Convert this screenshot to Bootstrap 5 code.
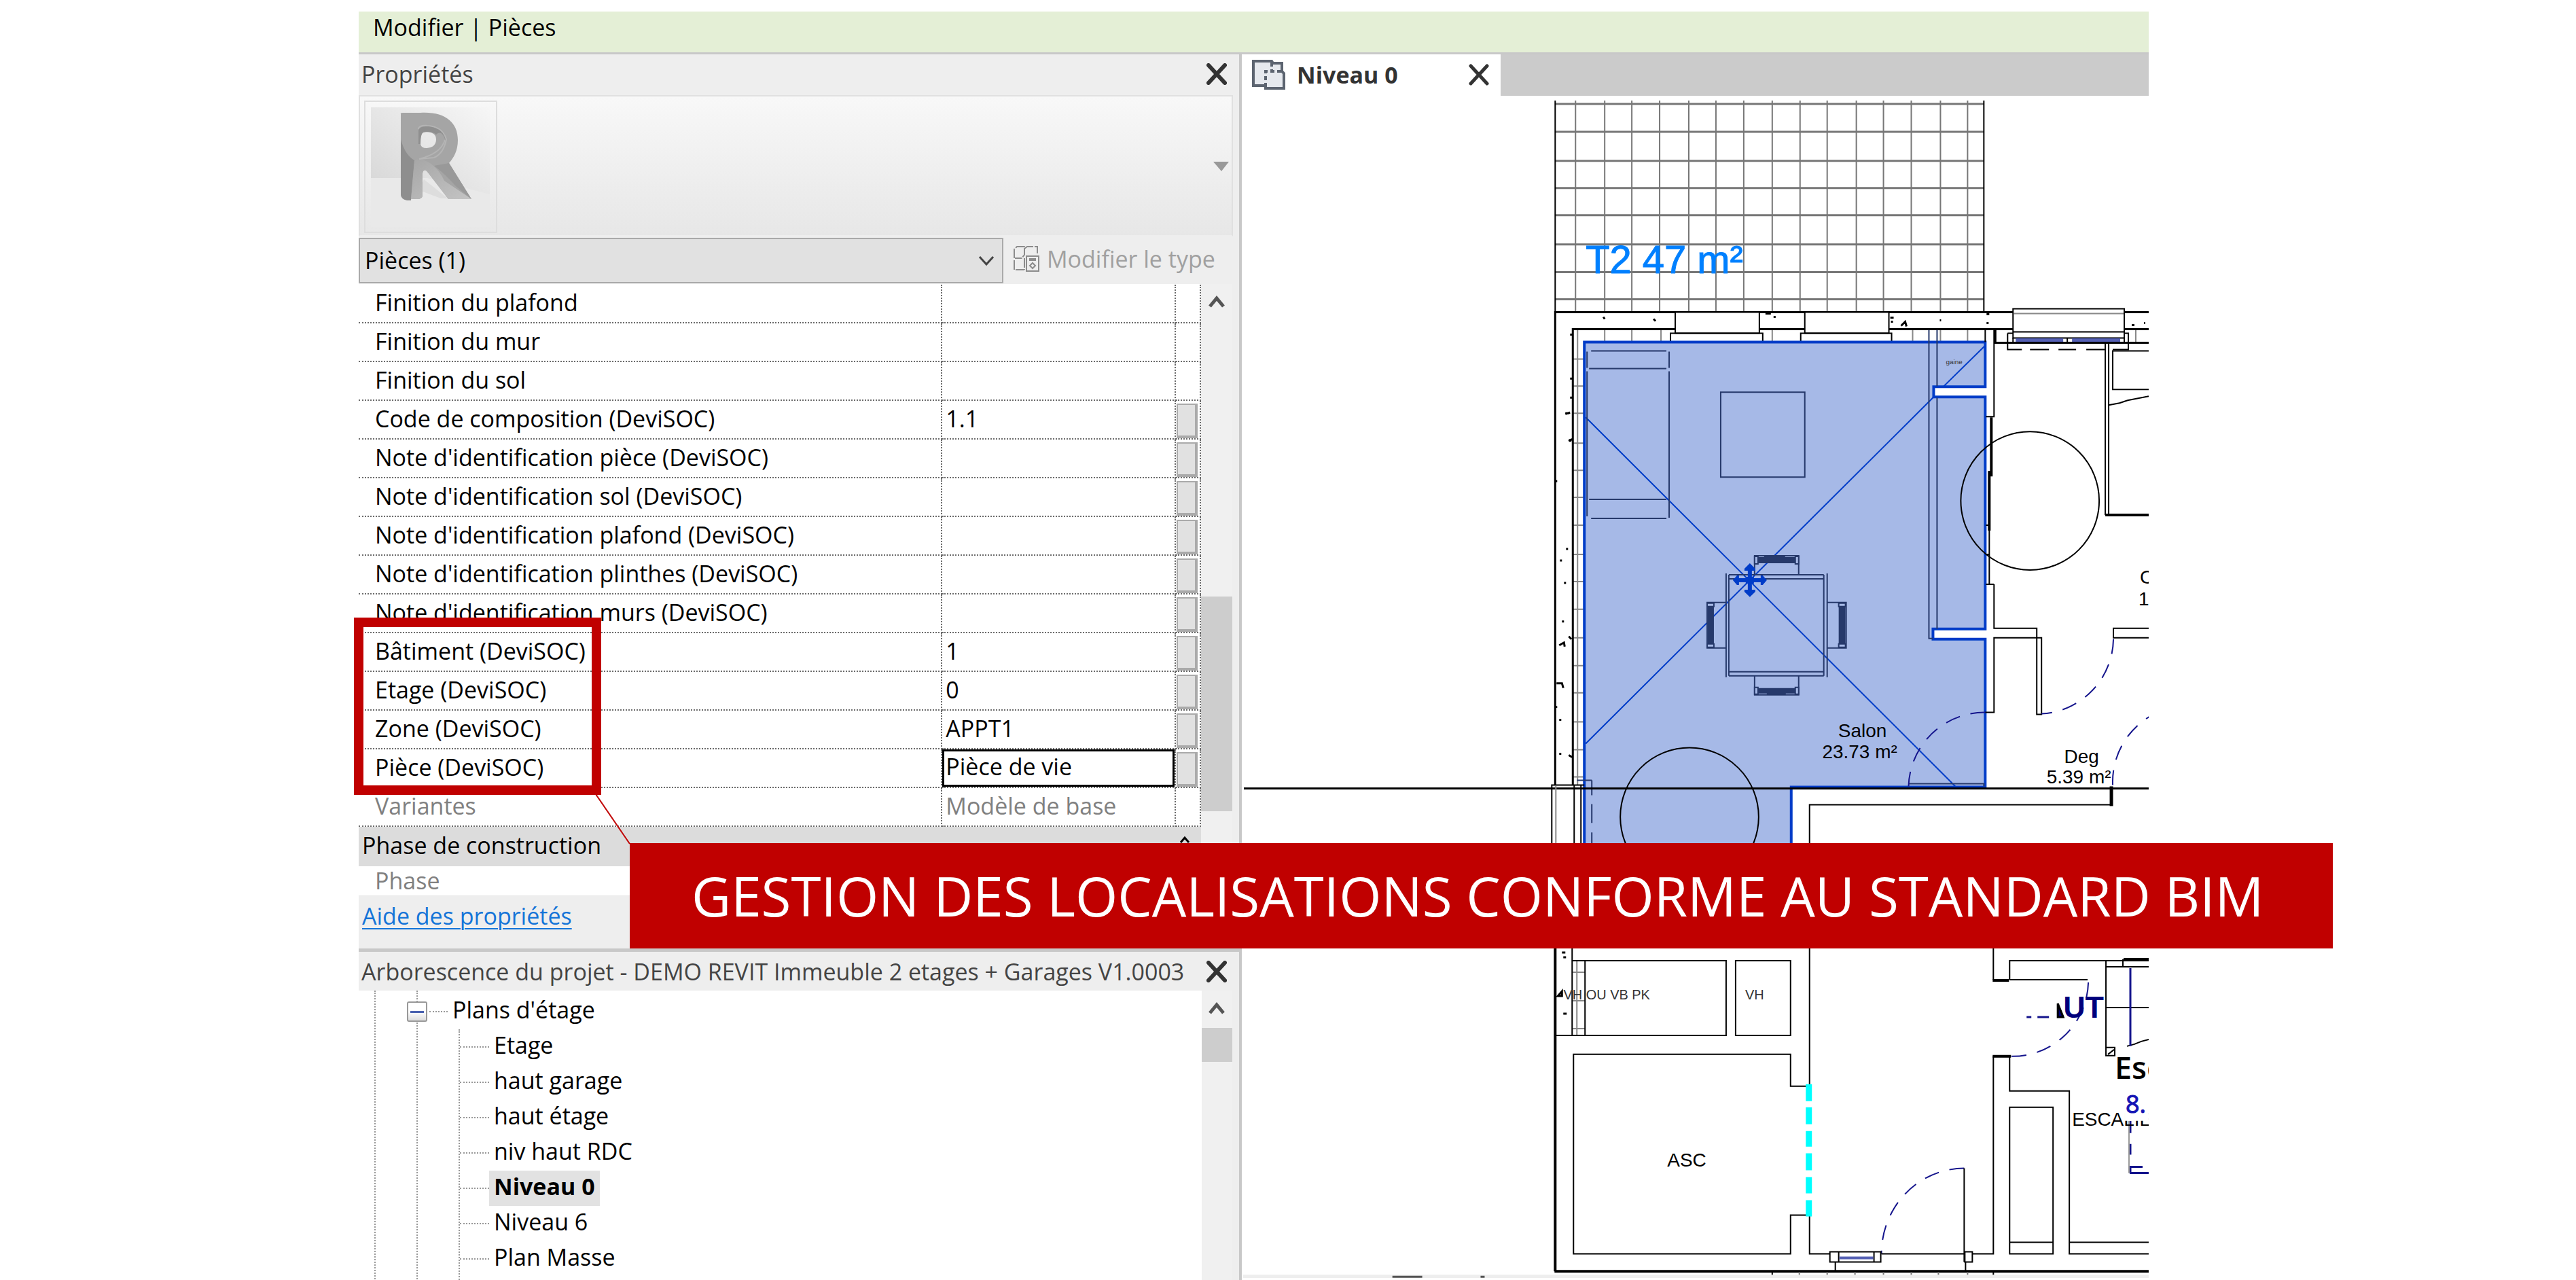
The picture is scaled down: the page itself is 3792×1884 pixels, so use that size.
<!DOCTYPE html>
<html lang="fr">
<head>
<meta charset="utf-8">
<meta name="viewport" content="width=device-width, initial-scale=1">
<title>Modifier | Pièces</title>
<link href="https://cdn.jsdelivr.net/npm/bootstrap@5.3.0/dist/css/bootstrap.min.css" rel="stylesheet">
<style>
  body { font-family: "Open Sans", "Noto Sans", sans-serif; font-size: 34px; line-height: 46px; color: #000; background: #fff; overflow: hidden; }
  .app { margin: 17px 629px 0 528px; height: calc(100vh - 17px); }
  .menubar { height: 63px; background: #e4efd6; border-bottom: 3px solid #c8c8c8; padding: 0 21px; }
  .side { flex: 1298 1 0; min-width: 0; background: #eee; border-right: 4px solid #c8c8c8; }
  .plan-pane { flex: 1337 1 0; min-width: 0; }
  .pane-title { height: 60px; color: #444; padding: 0 18px 2px 4px; white-space: nowrap; }
  .x-btn { border: 0; background: none; padding: 0; line-height: 0; }
  .type-box { height: 208px; margin-right: 9px; border: 2px solid #e0e0e0; border-bottom-color: #eee; background: linear-gradient(#f8f8f8, #e7e7e7); padding: 7px 4px 5px 6px; }
  .thumb { width: 196px; height: 195px; border: 2px solid #ddd; }
  .combo-row { height: 70px; }
  .combo { width: 949px; height: 67px; margin-top: 2px; }
  .combo select { appearance: none; width: 100%; height: 100%; border: 2px solid #aaa; background: #e1e1e1; padding: 0 7px 2px; color: #000; border-radius: 0; }
  .combo svg { right: 13px; top: 27px; pointer-events: none; }
  .edit-type { border: 0; background: none; padding: 0 0 4px 14px; color: #a0a0a0; gap: 10px; }
  .grid-box { height: 900px; }
  .grid-white { background: #fff; padding-top: 1px; overflow: hidden; flex: 1238 1 0; }
  .bar { flex: 46 0 0; background: #f0f0f0; margin-right: 10px; }
  .props { width: 100%; table-layout: fixed; border-collapse: separate; border-spacing: 0; }
  .props th, .props td { height: 57px; padding: 0 0 4px 5px; font-weight: 400; border-bottom: 2px dotted #6c6c6c; border-right: 2px dotted #6c6c6c; white-space: nowrap; overflow: hidden; }
  .props th { padding-left: 24px; }
  .props .tick { padding: 3px 1px 0 1px; line-height: 0; }
  .props .tick button { width: 31px; height: 51px; border: 2px solid #aaa; border-right-width: 4px; border-bottom-width: 4px; background: #e1e1e1; padding: 0; display: block; }
  .props input { width: 100%; height: 46px; border: 0; padding: 0; background: none; color: inherit; outline: 0; display: block; }
  .props .editing { padding: 0; }
  .props .editing input { height: 55px; border: 3px solid #000; padding: 0 0 6px 2px; }
  .props .off { color: #808080; }
  .props .group th, .props .group td { background: #dcdcdc; height: 58px; border: 0; padding-left: 5px; }
  .props .last th, .props .last td { height: 42px; padding-top: 0; padding-bottom: 0; line-height: 42px; border-bottom: 0; }
  .handle { background: #cdcdcd; }
  .help { height: 78px; border-top: 1px solid #e8e8e8; padding: 6px 5px; }
  .help a { color: #1474d8; text-decoration-thickness: 2px; text-underline-offset: 5px; }
  .tree-title { height: 62px; border-top: 5px solid #c8c8c8; padding-bottom: 0; }
  .tree { background: #fff; flex: 1238 1 0; padding-left: 23px; }
  .tree ul { list-style: none; margin: 0; padding: 0; border-left: 2px dotted #999; }
  .tree .l1, .tree .l2 { margin-left: 60px; }
  .tree .l1 { padding-top: 5px; }
  .tree .l2 { padding-bottom: 60px; }
  .tree .node { height: 52px; }
  .tree .node span { padding: 0 7px 6px; height: 52px; line-height: 46px; }
  .tree .l2 .node::before { content: ""; width: 43px; border-top: 2px dotted #999; }
  .tree .root { margin-left: -16px; }
  .tree .root::after { content: ""; width: 27px; border-top: 2px dotted #999; order: 1; margin-left: 3px; }
  .tree .root span { order: 2; }
  .fold { width: 30px; height: 30px; border: 2px solid #999; border-radius: 3px; background: linear-gradient(#fff 50%, #ddd); padding: 0; line-height: 0; }
  .fold i { display: block; height: 3px; margin: 0 3px; background: #4a62b0; }
  .tree .picked { background: #e2e2e2; font-weight: 700; }
  .tabs { height: 61px; background: #cbcbcb; }
  .tab-on { width: 381px; background: #fff; padding: 0 17px 2px 14px; color: #333; font-weight: 700; }
  .tab-on span { margin-left: 17px; }
  .plan { display: block; width: 100%; height: auto; font-family: "Liberation Sans", Arial, sans-serif; }
  .callout { left: -7px; top: 892px; width: 364px; height: 261px; border: 14px solid #c00000; }
  .leader { left: 348px; top: 1152px; }
  .banner { left: 399px; right: -271px; top: 1224px; height: 155px; background: #c00000; color: #fff; font-size: 80px; line-height: 110px; padding: 0 91px 2px; white-space: nowrap; }
</style>
</head>
<body>
<main class="app position-relative d-flex flex-column">
  <header class="menubar flex-shrink-0">Modifier | Pièces</header>
  <div class="d-flex flex-fill">
    <aside class="side d-flex flex-column">
      <div class="pane-title d-flex align-items-center justify-content-between">
        <span>Propriétés</span>
        <button class="x-btn" aria-label="Fermer Propriétés"><svg width="30" height="32" viewBox="0 0 30 32"><path d="M3 3 27 29M27 3 3 29" stroke="#333" stroke-width="6" stroke-linecap="round"/></svg></button>
      </div>
      <div class="type-box d-flex align-items-center justify-content-between">
        <div class="thumb">
          <svg class="d-block" width="192" height="191" viewBox="539 150 192 191">
            <defs>
              <linearGradient id="g1" x1="0" y1="1" x2="1" y2="0"><stop offset="0" stop-color="#d6d6d6"/><stop offset="1" stop-color="#f6f6f6"/></linearGradient>
              <linearGradient id="g2" x1="0" y1="0" x2="1" y2="1"><stop offset="0" stop-color="#a6a6a6"/><stop offset="1" stop-color="#c4c4c4"/></linearGradient>
            </defs>
            <path d="M547 158H722V334H547z" fill="#e9e9e9"/>
            <path d="M547 158H722V286L630 262H547z" fill="url(#g1)"/>
            <path d="M625 264 660 292 650 292 618 280z" fill="#ddd"/>
            <path d="M591 168Q590 166 594 166H620C656 164 675 180 675 206C675 222 669 232 662 240L695 293H661L631 254C627 248 623 250 623 256V287Q623 293 615 293H600Q591 293 591 286zM626 194Q620 194 620 200V212Q621 218 629 218Q643 217 643 205Q643 194 626 194z" fill="#a5a5a5" fill-rule="evenodd"/>
            <path d="M591 205Q597 228 611 236L606 295H600Q591 293 591 286z" fill="#8e8e8e"/>
            <path d="M611 236Q615 233 626 236Q645 244 655 266L695 293H661L631 254C627 248 623 250 623 256V287Q623 293 615 293H606z" fill="url(#g2)"/>
            <path d="M617 190Q618 184 630 185Q652 186 658 205Q654 226 640 232L618 234Q650 226 656 206" fill="none" stroke="#b4b4b4" stroke-width="2"/>
            <path d="M617 212V192Q618 185 632 186Q655 189 657 208Q652 190 643 198Q636 192 624 195Q620 197 620 212z" fill="#8f8f8f"/>
            <path d="M662 240 695 293 672 274Q654 254 640 244z" fill="#999"/>
          </svg>
        </div>
        <button class="x-btn align-self-center" aria-label="Choisir un type"><svg width="23" height="14" viewBox="0 0 23 14"><path d="M0 0H23L12 14z" fill="#999"/></svg></button>
      </div>
      <div class="combo-row d-flex">
        <div class="combo position-relative">
          <select aria-label="Catégorie"><option>Pièces (1)</option></select>
          <svg class="position-absolute" width="24" height="15" viewBox="0 0 24 15"><path d="M2 1 12 12 22 1" fill="none" stroke="#444" stroke-width="3"/></svg>
        </div>
        <button class="edit-type d-flex align-items-center">
          <svg width="40" height="40" viewBox="0 0 40 40" fill="none" stroke="#8c8c8c" stroke-width="2"><path d="M2 19V6L6 2H17V14L13 19H3M17 5 21 2H36V13M2 22V36H17M17 19V36" stroke-dasharray="14 2"/><path d="M20 16H38V38H20zM24 22H34M24 20H34"/><path d="M29 26 33 30 29 34 25 30z"/></svg>
          <span>Modifier le type</span>
        </button>
      </div>
      <div class="grid-box d-flex">
        <div class="grid-white">
          <table class="props">
            <colgroup><col style="width:69.3%"><col style="width:27.7%"><col style="width:3%"></colgroup>
            <tbody>
              <tr><th scope="row"><label for="p1">Finition du plafond</label></th><td><input id="p1"></td><td></td></tr>
              <tr><th scope="row"><label for="p2">Finition du mur</label></th><td><input id="p2"></td><td></td></tr>
              <tr><th scope="row"><label for="p3">Finition du sol</label></th><td><input id="p3"></td><td></td></tr>
              <tr><th scope="row"><label for="p4">Code de composition (DeviSOC)</label></th><td><input id="p4" value="1.1"></td><td class="tick"><button aria-label="Associer"></button></td></tr>
              <tr><th scope="row"><label for="p5">Note d'identification pièce (DeviSOC)</label></th><td><input id="p5"></td><td class="tick"><button aria-label="Associer"></button></td></tr>
              <tr><th scope="row"><label for="p6">Note d'identification sol (DeviSOC)</label></th><td><input id="p6"></td><td class="tick"><button aria-label="Associer"></button></td></tr>
              <tr><th scope="row"><label for="p7">Note d'identification plafond (DeviSOC)</label></th><td><input id="p7"></td><td class="tick"><button aria-label="Associer"></button></td></tr>
              <tr><th scope="row"><label for="p8">Note d'identification plinthes (DeviSOC)</label></th><td><input id="p8"></td><td class="tick"><button aria-label="Associer"></button></td></tr>
              <tr><th scope="row"><label for="p9">Note d'identification murs (DeviSOC)</label></th><td><input id="p9"></td><td class="tick"><button aria-label="Associer"></button></td></tr>
              <tr><th scope="row"><label for="p10">Bâtiment (DeviSOC)</label></th><td><input id="p10" value="1"></td><td class="tick"><button aria-label="Associer"></button></td></tr>
              <tr><th scope="row"><label for="p11">Etage (DeviSOC)</label></th><td><input id="p11" value="0"></td><td class="tick"><button aria-label="Associer"></button></td></tr>
              <tr><th scope="row"><label for="p12">Zone (DeviSOC)</label></th><td><input id="p12" value="APPT1"></td><td class="tick"><button aria-label="Associer"></button></td></tr>
              <tr><th scope="row"><label for="p13">Pièce (DeviSOC)</label></th><td class="editing"><input id="p13" value="Pièce de vie"></td><td class="tick"><button aria-label="Associer"></button></td></tr>
              <tr class="off"><th scope="row"><label for="p14">Variantes</label></th><td><input id="p14" value="Modèle de base" readonly></td><td></td></tr>
              <tr class="group"><th scope="rowgroup" colspan="2">Phase de construction</th><td><svg class="d-block" width="16" height="26" viewBox="0 0 16 26"><path d="M2 9 8 2 14 9M2 20 8 13 14 20" fill="none" stroke="#000" stroke-width="3"/></svg></td></tr>
              <tr class="off last"><th scope="row">Phase</th><td></td><td></td></tr>
            </tbody>
          </table>
        </div>
        <div class="bar d-flex flex-column align-items-center">
          <svg class="mt-3 flex-shrink-0" width="24" height="20" viewBox="0 0 24 20"><path d="M2 17 12 5 22 17" fill="none" stroke="#555" stroke-width="5"/></svg>
          <div class="handle w-100" style="height:316px;margin-top:424px"></div>
        </div>
      </div>
      <div class="help"><a href="#">Aide des propriétés</a></div>
      <div class="pane-title tree-title d-flex align-items-center justify-content-between">
        <span>Arborescence du projet - DEMO REVIT Immeuble 2 etages + Garages V1.0003</span>
        <button class="x-btn" aria-label="Fermer Arborescence"><svg width="30" height="32" viewBox="0 0 30 32"><path d="M3 3 27 29M27 3 3 29" stroke="#333" stroke-width="6" stroke-linecap="round"/></svg></button>
      </div>
      <div class="d-flex flex-fill">
        <nav class="tree">
          <ul><li><ul class="l1"><li>
            <div class="node root d-flex align-items-center"><button class="fold" aria-label="Réduire"><i></i></button><span>Plans d'étage</span></div>
            <ul class="l2">
              <li class="node d-flex align-items-center"><span>Etage</span></li>
              <li class="node d-flex align-items-center"><span>haut garage</span></li>
              <li class="node d-flex align-items-center"><span>haut étage</span></li>
              <li class="node d-flex align-items-center"><span>niv haut RDC</span></li>
              <li class="node d-flex align-items-center"><span class="picked">Niveau 0</span></li>
              <li class="node d-flex align-items-center"><span>Niveau 6</span></li>
              <li class="node d-flex align-items-center"><span>Plan Masse</span></li>
            </ul>
          </li></ul></li></ul>
        </nav>
        <div class="bar d-flex flex-column align-items-center">
          <svg class="mt-3 flex-shrink-0" width="24" height="20" viewBox="0 0 24 20"><path d="M2 17 12 5 22 17" fill="none" stroke="#555" stroke-width="5"/></svg>
          <div class="handle w-100" style="height:50px;margin-top:19px"></div>
        </div>
      </div>
    </aside>
    <section class="plan-pane">
      <div class="tabs">
        <div class="tab-on d-flex align-items-center h-100">
          <svg width="50" height="44" viewBox="0 0 50 44"><path d="M3 2H30L32 5H45V17L48 20V42H21V38H3z" fill="#e6e9ee" stroke="#5c6470" stroke-width="4"/><path d="M21 40V17H46M30 4V17" fill="none" stroke="#5c6470" stroke-width="4" stroke-dasharray="6 4"/></svg>
          <span>Niveau 0</span>
          <button class="x-btn ms-auto" aria-label="Fermer Niveau 0"><svg width="30" height="32" viewBox="0 0 30 32"><path d="M3 3 27 29M27 3 3 29" stroke="#333" stroke-width="5" stroke-linecap="round"/></svg></button>
        </div>
      </div>
      <svg class="plan" viewBox="1828 139 1337 1743" fill="none" stroke="#000" stroke-width="3">
        <!-- terrasse -->
        <path stroke="#777" stroke-width="2" d="M2320 146V458M2363 146V458M2403 146V458M2444 146V458M2487 146V458M2527 146V458M2568 146V458M2610 146V458M2651 146V458M2691 146V458M2734 146V458M2774 146V458M2815 146V458M2858 146V458M2898 146V458"/>
        <path stroke="#777" d="M2290 151H2922M2290 192H2922M2290 235H2922M2290 275H2922M2290 315H2922M2290 358H2922M2290 399H2922M2290 439H2922"/>
        <path stroke-width="2" d="M2290 146V458M2922 146V458"/>
        <!-- doublage carrelé -->
        <path stroke="#888" stroke-width="2" d="M2323 484V1155M2363 484V502M2403 484V502M2446 484V502M2610 484V502M2817 484V502M2858 484V502M2898 484V502M2316 527H2333M2316 567H2333M2316 607H2333M2316 651H2333M2316 691H2333M2316 731H2333M2316 772H2333M2316 815H2333M2316 855H2333M2316 896H2333M2316 938H2333M2316 979H2333M2316 1019H2333M2316 1062H2333M2316 1103H2333M2316 1143H2333M3146 484V503"/>
        <!-- murs extérieurs -->
        <path d="M2290 1155V458H2965M2316 1155V483H2467M2591 483H2658M2782 483H2965M3129 458H3165M3129 483H3165M2939 483V503H3165M2939 503H2970"/>
        <path fill="#fff" d="M2467 458H2591V489H2467zM2658 458H2782V489H2658z" stroke-width="2"/>
        <path stroke-width="2" d="M2460 502V489H2596V502M2652 502V489H2786V502"/>
        <!-- séjour sélectionné -->
        <path fill="#a6b9e7" stroke="#003cc8" stroke-width="4" d="M2333 502H2924V568H2848V583H2924V876V925H2847V940H2924V1158H2638V1300H2333z"/>
        <path stroke="#003cc8" stroke-width="2" d="M2335 613 2880 1157M2335 1094 2848 583M2863 567 2923 508"/>
        <path stroke="#26396b" stroke-width="2" d="M2841 484V939H2847M2853 484V567M2853 584V925"/>
        <path stroke="#26396b" stroke-width="2" d="M2343 515H2454M2340 541H2454M2337 516V540M2458 516V540M2337 545V759M2458 545V761M2340 734H2454M2343 762H2454M2534 576H2658V701H2534z"/>
        <path stroke="#26396b" stroke-width="2" d="M2542 843V996M2546 845V994M2686 845V994M2691 843V996M2546 845H2686M2546 851H2686M2546 988H2686M2546 994H2686M2584 845V817H2649V845M2584 994V1022H2649V994M2541 886H2514V953H2541M2691 886H2719V953H2691M2811 1153H2922V1157M2344 1148V1170M2344 1183V1211M2344 1225V1241M2322 1148H2344"/>
        <path fill="#26396b" stroke="none" d="M2588 819H2598V817H2629V819H2646V828H2588zM2588 1012H2646V1020H2630V1022H2602V1020H2588zM2515 892H2524V948H2515zM2708 892H2718V948H2708z"/>
        <path fill="#a6b9e7" stroke="#26396b" stroke-width="2" d="M2584 818H2589V829H2584zM2644 818H2649V829H2644zM2584 1011H2589V1021H2584zM2644 1011H2649V1021H2644zM2514 887H2524V892H2514zM2514 947H2524V952H2514zM2708 887H2718V892H2708zM2708 947H2718V952H2708z"/>
        <path stroke="#003cc8" stroke-width="6" d="M2577 833V873M2557 853H2597"/>
        <path fill="#003cc8" stroke="none" d="M2577 828 2585 836V839H2569V836zM2577 878 2585 870V867H2569V870zM2552 853 2558 846H2561V860H2558zM2602 853 2596 846H2593V860H2596zM2571 848H2583V858H2571z"/>
        <circle cx="2990" cy="736" r="102" stroke-width="2"/>
        <circle cx="2488" cy="1202" r="102" stroke-width="2"/>
        <!-- axe et cloisons -->
        <path d="M1831 1160H3165" stroke-width="3"/>
        <path stroke-width="2" d="M2285 1260V1155H2333M2318 1155V1260M2328 1155V1260M2665 1260V1184H3110"/><path stroke="#888" stroke-width="2" d="M2291 1156V1260"/>
        <path stroke-width="5" d="M3110 1157V1186"/>
        <path stroke-width="2" d="M2924 483V502M2937 483V612H2925M2930 692V859M2937 859V924H3000V1051H3007V938H2937V1048H2924M2925 859H2937M2925 772H2930M2925 815H2930M3165 924H3113V938H3165M3101 504V757M3106 504V755M3165 515H3112V572H3165M3106 595 3122 592 3134 588 3165 582"/>
        <path stroke-width="4" d="M2933 613V700M2930 692V780M3101 757H3165"/>
        <!-- fenêtre -->
        <path fill="#fff" stroke-width="2" d="M2965 453H3129V496H2965z"/><path stroke-width="2" d="M2965 487H3129M2957 489H2965M3129 489H3135V513M2957 489V513H2978M2990 513H3018M3032 513H3058M3073 513H3100M3112 513H3136M2965 496V503M3045 496V503M3129 496V503"/>
        <path stroke="#888" stroke-width="2" d="M2966 460H3128"/>
        <path stroke="#5560b4" stroke-width="5" d="M2969 499H3039M3052 499H3123"/>
        <!-- débattements de portes -->
        <path stroke="#14148c" stroke-width="2" stroke-dasharray="22 16" d="M2924 1048A112 112 0 0 0 2811 1157M3113 940A112 112 0 0 1 3007 1050M3112 1155A112 112 0 0 1 3170 1052M3076 1446A112 112 0 0 1 2962 1555M2893 1720A122 126 0 0 0 2771 1846"/>
        <!-- remplissage béton -->
        <path stroke-width="3" d="M2361 465 2363 468M2435 468 2438 471M2600 460H2608M2612 465H2615M2784 466H2789M2785 472H2788M2800 478 2806 472 2808 479M2857 470H2859M2926 461H2930M2926 474H2929M3140 477H3144M3158 474H3160M2312 491H2315M2312 556H2315M2312 584H2315M2305 608 2312 606M2310 648 2315 645M2305 607H2311M2310 646 2314 648M2290 707H2293M2306 807H2309M2297 824H2300M2303 857H2306M2300 914H2303M2310 936 2314 940M2296 949 2303 945 2304 951M2292 1005H2300L2302 1012M2290 1040H2293M2296 1059H2299M2296 1109H2299M2310 1111 2315 1114M2300 1402H2305M2302 1409H2306M2302 1492H2307M2294 1466 2300 1459V1466z"/>
        <!-- gaines -->
        <path stroke="#888" stroke-width="2" d="M2322 1415V1523M2316 1431H2334M2316 1473H2334M2316 1514H2334"/>
        <path stroke-width="2" d="M2315 1390V1523M2334 1414V1523M2315 1414H2542V1524H2290M2556 1414H2637V1524H2556zM2665 1390V1599H2637V1552H2317V1846H2637V1789H2665V1846H2696M2936 1390V1442M2960 1442V1414H3165M2960 1442H3075M2960 1555V1606H3048V1846H3165M3048 1829H3165M2936 1555V1846H2905M2960 1630H3024V1846H2960zM2960 1829H3024M2893 1720V1858M2895 1858V1872M2771 1846H2893M2703 1858V1872M3102 1414V1554H3115V1542H3102M3102 1423H3165M3102 1483H3165M3133 1540 3144 1537 3154 1533 3165 1530M3127 1412V1423M3105 1552 3114 1545"/>
        <path stroke-width="4" d="M2290 1390V1872M2289 1872H3165M2935 1443H2959M2935 1555H2962M3128 1412H3165"/>
        <path fill="#fff" stroke-width="2" d="M2695 1843H2770V1858H2695zM2894 1843H2905V1858H2894zM2708 1843V1858M2760 1843V1858"/><path stroke="#5560b4" stroke-width="4" d="M2709 1852H2759"/>
        <path stroke="#0ff" stroke-width="9" d="M2664 1596V1621M2664 1630V1655M2664 1665V1688M2664 1698V1723M2664 1733V1757M2664 1767V1791"/>
        <path stroke="#14148c" stroke-width="3" d="M3138 1425V1540M3138 1650V1668M3138 1684V1700M3137 1718H3156M3137 1727H3165M3138 1718V1727M2985 1497H2992M3001 1497H3018"/>
        <path d="M3031 1477V1497H3039zM3031 1477 3039 1497" fill="#00007c"/>
        <path stroke="#999" stroke-width="2" d="M3136 1650V1727"/>
        <path stroke-width="2" d="M2610 1873V1878M2936 1873V1878"/><path stroke="#777" stroke-width="2" d="M2650 1873V1878M2691 1873V1878M2732 1873V1878M2774 1873V1878M2815 1873V1878M2855 1873V1878M2898 1873V1878"/>
        <path fill="#eee" stroke="none" d="M1830 1877H3165V1884H1830z"/><path stroke="#555" d="M2050 1880H2094M2180 1880H2186"/>
        <g fill="#000" stroke="none" font-size="28" text-anchor="middle">
          <text x="2451" y="400" font-size="58" fill="#0080ff" stroke="#0080ff" stroke-width="1">T2 47 m²</text>
          <text x="2743" y="1084">Salon</text><text x="2739" y="1115">23.73 m²</text>
          <text x="3066" y="1123">Deg</text><text x="3062" y="1153">5.39 m²</text>
          <text x="2484" y="1717">ASC</text>
          <text x="2366" y="1471" font-size="20" fill="#333">VH OU VB PK</text><text x="2584" y="1471" font-size="20" fill="#333">VH</text>
        </g>
        <g fill="#000" stroke="none" font-size="28">
          <text x="3152" y="858">C</text><text x="3150" y="890">1</text><text x="2866" y="535" font-size="10" fill="#333">gaine</text>
          <text x="3052" y="1657">ESCALIER</text>
          <path d="M3130 1610H3165V1650H3130z" fill="#fff"/>
          <text x="3039" y="1498" font-size="45" font-weight="700" fill="#00007c">UT</text>
          <text x="3115" y="1588" font-size="45" font-weight="600" font-family="Open Sans">Esc</text>
          <text x="3131" y="1638" font-size="36" font-family="Open Sans" fill="#1414b4" stroke="#1414b4" stroke-width="1">8.</text>
        </g>
      </svg>
    </section>
  </div>
  <div class="callout position-absolute"></div>
  <svg class="leader position-absolute" width="52" height="74" viewBox="0 0 52 74"><path d="M1 0 51 73" stroke="#c00000" stroke-width="2"/></svg>
  <div class="banner position-absolute d-flex align-items-center"><span>GESTION DES LOCALISATIONS CONFORME AU STANDARD BIM</span></div>
</main>
<script src="https://cdn.jsdelivr.net/npm/bootstrap@5.3.0/dist/js/bootstrap.bundle.min.js"></script>
</body>
</html>
